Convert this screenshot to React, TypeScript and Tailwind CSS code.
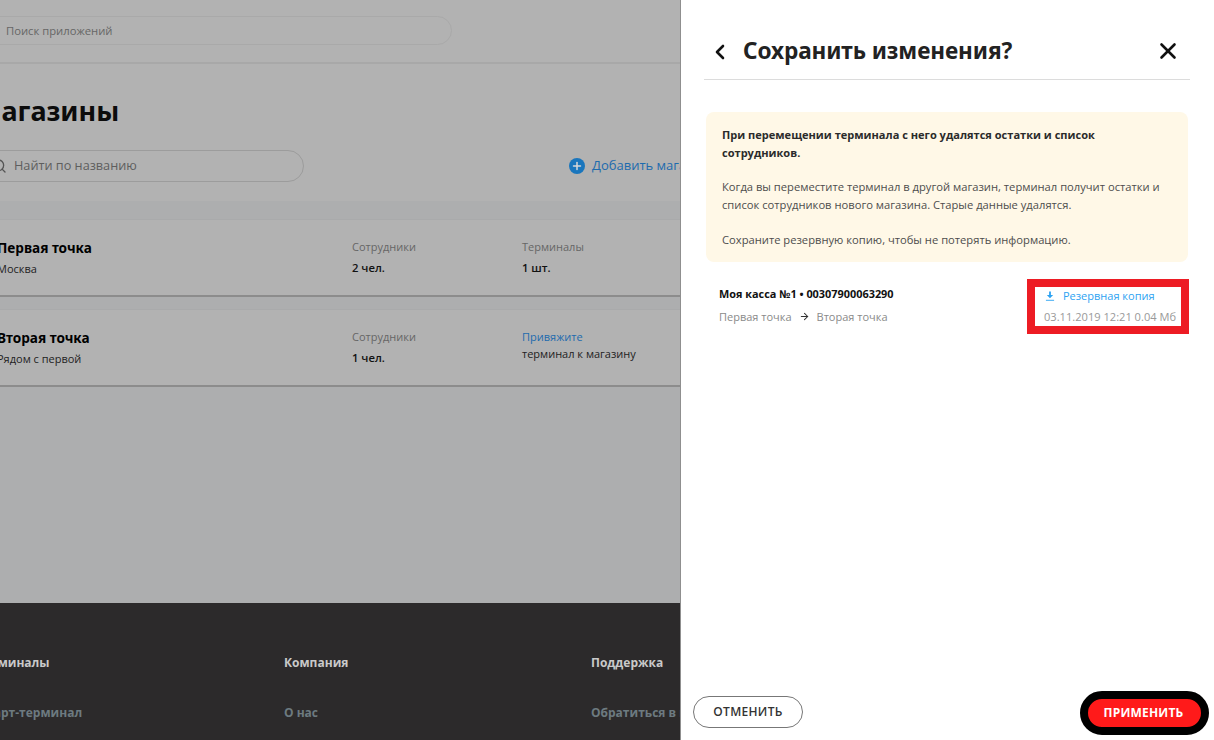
import { ChevronLeft, X, Search, Plus, ArrowRight } from "lucide-react";

const body = "font-['Open_Sans','Noto_Sans',sans-serif]";
const head = "font-['Noto_Sans',sans-serif]";

function Store({ name, city, staff, last }: { name: string; city: string; staff: string; last: React.ReactNode }) {
  return (
    <div className="h-[78px] shrink-0 bg-[#b2b2b2] border-t border-[#a9aaab] border-b-2 border-b-[#8c8c8c] flex">
      <div className="w-[355px] shrink-0 pt-[18px]">
        <div className={`${head} font-bold text-[13.6px] leading-[19px] text-black`}>{name}</div>
        <div className="text-[11px] leading-[16px] mt-[4px] text-[#222]">{city}</div>
      </div>
      <div className="w-[170px] shrink-0 pt-[18px]">
        <div className="text-[11px] leading-[17px] text-[#666]">Сотрудники</div>
        <div className="text-[11.25px] leading-[16px] mt-[5px] font-semibold text-[#111]">{staff}</div>
      </div>
      <div className="flex-1 pt-[18px]">{last}</div>
    </div>
  );
}

export default function App() {
  return (
    <div className={`${body} w-[1214px] h-[740px] overflow-hidden flex bg-white`}>
      <div className="w-[680px] h-full shrink-0 overflow-hidden flex flex-col bg-[#b2b2b2]">
        <div className="h-[64px] shrink-0 border-b-2 border-[#a8a8a8] pt-[16px]">
          <div className="-ml-[40px] w-[492px] h-[29px] border border-[#a9a9a9] rounded-full pl-[45px] text-[11.25px] leading-[28px] text-[#666]">Поиск приложений</div>
        </div>
        <div className="h-[137px] shrink-0 -ml-[24px] flex flex-col">
          <h1 className={`${head} font-bold text-[27px] leading-[34px] text-[#0c0c0c] mt-[30px]`}>Магазины</h1>
          <div className="flex items-center mt-[22px] w-[704px]">
            <div className="w-[328px] shrink-0 h-[32px] border border-[#9c9c9c] rounded-full flex items-center pl-[14px] gap-[7px]">
              <Search className="w-[16px] h-[16px] text-[#555]" />
              <span className="text-[12.7px] text-[#5e5e5e]">Найти по названию</span>
            </div>
            <div className="ml-[265px] shrink-0 flex items-center gap-[7px] whitespace-nowrap">
              <span className="w-[16px] h-[16px] rounded-full bg-[#1a76bd] flex items-center justify-center">
                <Plus className="w-[12px] h-[12px] text-[#d8d8d8]" strokeWidth={3} />
              </span>
              <span className="text-[13px] text-[#1d6bae]">Добавить магазин</span>
            </div>
          </div>
        </div>
        <div className="flex-1 bg-[#adaeaf] pt-[18px] flex flex-col gap-[12px] -ml-[3px]">
          <Store
            name="Первая точка"
            city="Москва"
            staff="2 чел."
            last={
              <>
                <div className="text-[11px] leading-[17px] text-[#666]">Терминалы</div>
                <div className="text-[11.25px] leading-[16px] mt-[5px] font-semibold text-[#111]">1 шт.</div>
              </>
            }
          />
          <Store
            name="Вторая точка"
            city="Рядом с первой"
            staff="1 чел."
            last={
              <>
                <div className="text-[11px] leading-[17px] text-[#1d6bae]">Привяжите</div>
                <div className="text-[11px] leading-[16px] mt-[1px] text-[#222]">терминал к магазину</div>
              </>
            }
          />
        </div>
        <div className="h-[137px] shrink-0 bg-[#2c2a2b] -ml-[24px] pt-[51px] flex text-[12px] font-bold whitespace-nowrap">
          <div className="w-[308px] shrink-0">
            <div className="text-[#c9c9c9] leading-[17px]">Терминалы</div>
            <div className="text-[#6d7a80] leading-[17px] mt-[33px]">Смарт-терминал</div>
          </div>
          <div className="w-[307px] shrink-0">
            <div className="text-[#c9c9c9] leading-[17px]">Компания</div>
            <div className="text-[#6d7a80] leading-[17px] mt-[33px]">О нас</div>
          </div>
          <div className="shrink-0">
            <div className="text-[#c9c9c9] leading-[17px]">Поддержка</div>
            <div className="text-[#6d7a80] leading-[17px] mt-[33px]">Обратиться в поддержку</div>
          </div>
        </div>
      </div>

      <div className="w-[534px] h-full shrink-0 bg-white border-l border-[#8f8f8f] flex flex-col pl-[23px] pr-[24px]">
        <div className="h-[80px] shrink-0 border-b border-[#dcdcdc] flex items-center pt-[24px]">
          <ChevronLeft className="w-[24px] h-[24px] text-[#111] ml-[4px]" strokeWidth={2.6} />
          <h2 className={`${head} ml-[11px] font-bold text-[22.6px] leading-[32px] text-[#222] flex-1 -mt-[1px] tracking-[-0.1px]`}>Сохранить изменения?</h2>
          <X className="w-[26px] h-[26px] text-[#111] mr-[9px] -mt-[1px]" strokeWidth={2.4} />
        </div>

        <div className="ml-[2px] mr-[2px] mt-[32px] h-[150px] shrink-0 rounded-[8px] bg-[#fff8e7] pl-[16px] pr-[16px] pt-[14px] text-[11.2px] leading-[17.5px] text-[#4d4d4d]">
          <p className="font-bold text-[11.05px] text-[#2b2b2b]">При перемещении терминала с него удалятся остатки и список сотрудников.</p>
          <p className="mt-[17px]">Когда вы переместите терминал в другой магазин, терминал получит остатки и список сотрудников нового магазина. Старые данные удалятся.</p>
          <p className="mt-[18px]">Сохраните резервную копию, чтобы не потерять информацию.</p>
        </div>

        <div className="flex justify-between mt-[17px] ml-[15px] mr-[1px]">
          <div className="pt-[7px]">
            <div className="text-[10.9px] leading-[15px] font-bold text-[#111]">Моя касса №1 • 00307900063290</div>
            <div className="flex items-center mt-[7px] text-[11px] leading-[17px] text-[#8a8a8a]">
              Первая точка
              <ArrowRight className="w-[11px] h-[11px] mx-[7px] text-[#333]" strokeWidth={2.2} />
              Вторая точка
            </div>
          </div>
          <div className="w-[162px] h-[55px] border-[8px] border-[#ed1c24] bg-white flex flex-col items-start pl-[9px]">
            <div className="flex items-center text-[11px] leading-[17px] text-[#2ea3f2]">
              <svg viewBox="0 0 10 11" className="w-[10px] h-[10px] mr-[8px] ml-[1px]" fill="#2ea3f2">
                <path d="M4 0.5h2v4h2.5L5 8 1.5 4.5H4z" />
                <rect x="0.5" y="9.7" width="9" height="1" />
              </svg>
              Резервная копия
            </div>
            <div className="mt-[5px] text-[11.1px] leading-[16px] text-[#999] whitespace-nowrap">03.11.2019 12:21 0.04 Мб</div>
          </div>
        </div>

        <div className="mt-auto mb-[5px] flex justify-between items-center -ml-[11px] -mr-[19px]">
          <button className="w-[110px] h-[32px] mb-[2px] rounded-full border border-[#777] bg-white text-[12px] font-semibold text-[#333] tracking-[0.3px]">ОТМЕНИТЬ</button>
          <button className="w-[129px] h-[44px] pr-[2px] rounded-full border-[8px] border-black bg-[#ff1a1a] text-[12px] font-bold text-white tracking-[0.2px]">ПРИМЕНИТЬ</button>
        </div>
      </div>
    </div>
  );
}
